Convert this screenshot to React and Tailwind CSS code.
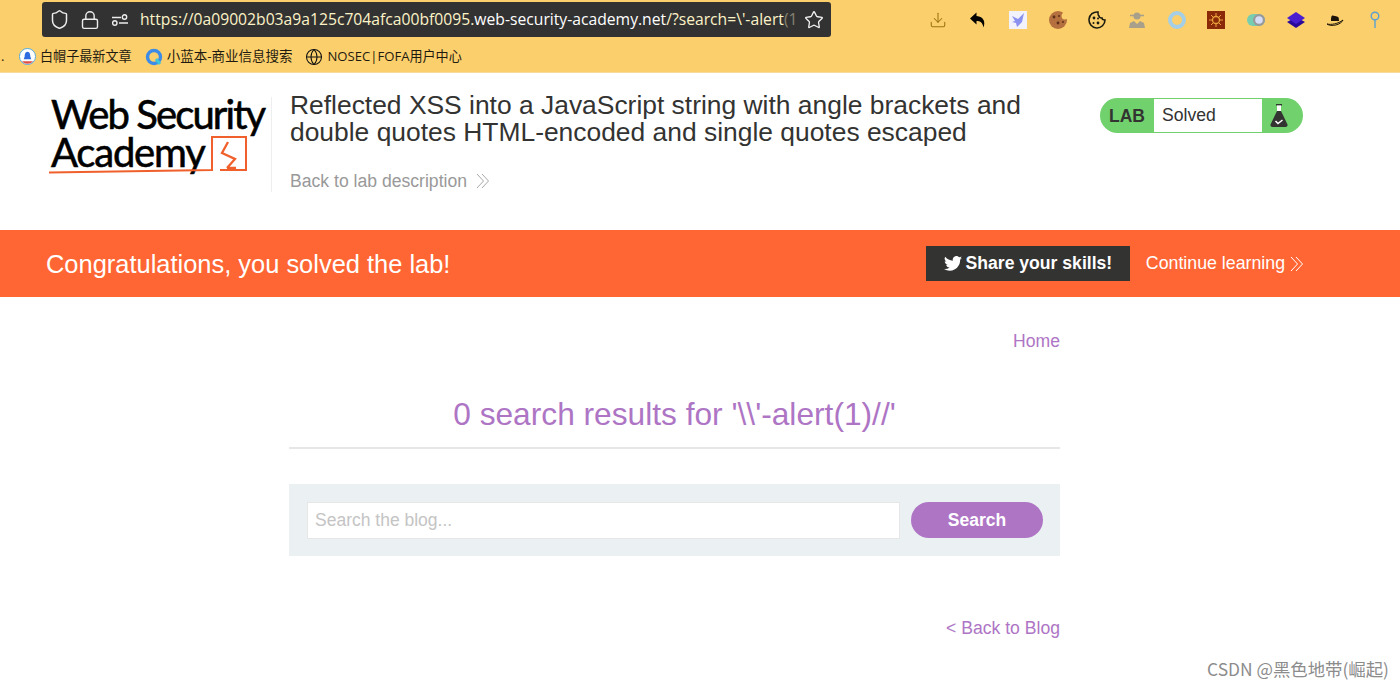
import React from "react";
import { Shield, Lock, Star, Download, Globe } from "lucide-react";

const sans = "font-['Liberation_Sans',Arial,'Noto_Sans_CJK_SC',sans-serif]";

function Chevrons({ className, color }) {
  return (
    <svg className={className} width="14" height="16" viewBox="0 0 14 16" fill="none" stroke={color} strokeWidth="1">
      <path d="M1 1l6.500 7L1 15M6 1l6.500 7L6 15" />
    </svg>
  );
}

function Extensions() {
  return (
    <div className="flex items-center gap-[21.7px]">
      <Download size={18} strokeWidth={1.4} color="#9a7412" />
      <svg width="18" height="18" viewBox="0 0 18 18" fill="#000"><path d="M7.500 1.500L1 7.500l6.500 6V10c3.500 0 6 1 7 6.500 2-5.500.500-11-7-11.500z" /></svg>
      <svg width="18" height="18" viewBox="0 0 18 18"><rect width="18" height="18" fill="#f1f2fb" /><path d="M15 2l-2 9-5 5-1-4-4-1 3-1-3-5 6 3z" fill="#8b91ee" /></svg>
      <svg width="18" height="18" viewBox="0 0 18 18"><circle cx="9" cy="9" r="9" fill="#b4703f" /><circle cx="16" cy="5" r="3.500" fill="#fbcf6b" /><circle cx="5" cy="6" r="1.400" fill="#5c2f18" /><circle cx="9" cy="12" r="1.400" fill="#5c2f18" /><circle cx="10" cy="5" r="1" fill="#5c2f18" /><circle cx="14" cy="11" r="1" fill="#5c2f18" /></svg>
      <svg width="18" height="18" viewBox="0 0 18 18"><path d="M10 1a8 8 0 1 0 7 8c-2 0-3-1-3-2-2 0-3-1-3-2-1 0-1-2-1-4z" fill="#fbcf6b" stroke="#1c1c10" strokeWidth="1.600" /><circle cx="6" cy="7" r="1.400" fill="#1c1c10" /><circle cx="10" cy="12" r="1.400" fill="#1c1c10" /><circle cx="10" cy="7.500" r="1" fill="#1c1c10" /><circle cx="5.500" cy="12" r="1" fill="#1c1c10" /></svg>
      <svg width="18" height="18" viewBox="0 0 18 18" fill="#a8a08a"><circle cx="9" cy="5" r="3.600" /><path d="M2 3.800h14v1.400H2zM1 17l1-5 4-2 3 3v4zM17 17l-1-5-4-2-3 3v4z" /></svg>
      <svg width="18" height="18" viewBox="0 0 18 18" fill="none"><circle cx="9" cy="9" r="7" stroke="#a4cfe6" strokeWidth="4" /></svg>
      <svg width="18" height="18" viewBox="0 0 18 18"><rect width="18" height="18" fill="#8a2a08" /><circle cx="9" cy="9" r="3.500" fill="none" stroke="#e9a23c" strokeWidth="1.300" /><path d="M9 2v3M9 13v3M2 9h3M13 9h3M4 4l2 2M12 12l2 2M14 4l-2 2M6 12l-2 2" stroke="#e9a23c" /></svg>
      <svg width="18" height="18" viewBox="0 0 18 18"><rect y="3" width="18" height="12" rx="6" fill="#76cdb0" /><rect x="6" y="3" width="12" height="12" rx="6" fill="#9a9a9a" /><circle cx="12" cy="9" r="3.800" fill="#d6def7" /></svg>
      <svg width="18" height="18" viewBox="0 0 18 18"><path d="M9 6l9 5-9 6-9-6z" fill="#2a0a9a" /><path d="M9 1l9 6-9 6-9-6z" fill="#4a1fd0" /></svg>
      <svg width="18" height="18" viewBox="0 0 18 18"><path d="M5 10c0-6 1-6 4-5s4 0 4 5z" fill="#1c1408" /><path d="M1 13c4 1 11 0 16-4-2 5-12 7-16 4z" fill="#fbcf6b" stroke="#1c1408" strokeWidth="1" /></svg>
      <svg width="18" height="18" viewBox="0 0 18 18" fill="none" stroke="#5b9fd3" strokeWidth="1.400"><circle cx="9" cy="5" r="3.800" /><path d="M9 9v8" /></svg>
    </div>
  );
}

function BrowserChrome() {
  return (
    <div className={`h-[73px] bg-[#fbcf6b] border-b border-[#f5dc9a] flex flex-col ${sans}`}>
      <div className="flex items-center h-[37px] pt-[2px] pl-[42px] pr-[16px] justify-between">
        <div className="w-[789px] h-[35px] bg-[#323232] rounded-[3px] flex items-center pl-[7px] pr-[7px] shrink-0">
          <Shield size={21} strokeWidth={1.700} color="#ececec" />
          <Lock size={20} strokeWidth={1.700} color="#ececec" className="ml-[10px]" />
          <svg className="ml-[12px]" width="16" height="12" viewBox="0 0 16 12" fill="none" stroke="#ececec" strokeWidth="1.400">
            <path d="M0 3.500h9M7 9h9" />
            <circle cx="12.500" cy="3" r="2.200" />
            <circle cx="2.800" cy="9" r="2.200" />
          </svg>
          <span className="ml-[12px] w-[658px] overflow-hidden whitespace-nowrap text-[15.700px] leading-[35px] font-['Open_Sans',sans-serif] text-[#fdf3c8]">
            https://0a09002b03a9a125c704afca00bf0095.<span className="text-white">web-security-academy.net</span>/?search=\'-alert<span className="opacity-40">(1</span>
          </span>
          <Star size={20} strokeWidth={1.600} color="#f0f0f0" className="ml-[6px]" />
        </div>
        <Extensions />
      </div>
      <div className="flex items-center h-[36px] pt-[4px] text-[#1f1a10] font-['Open_Sans','Noto_Sans_CJK_SC',sans-serif]">
        <span className="ml-[1px] w-[18px] text-[13px]">.</span>
        <svg width="17" height="17" viewBox="0 0 18 18"><circle cx="9" cy="9" r="8.500" fill="#fff" stroke="#4da7e0" /><path d="M9 4c2.500 0 3 3 3 5l1 3H5l1-3c0-2 .500-5 3-5z" fill="#2f6be0" /><path d="M3 14a8 8 0 0 0 12 0z" fill="#e04f3f" /></svg>
        <span className="ml-[4px] text-[13.100px]">白帽子最新文章</span>
        <svg className="ml-[13px]" width="18" height="18" viewBox="0 0 18 18" fill="none"><circle cx="9" cy="9" r="6.500" stroke="#3c8be6" strokeWidth="3.400" /><path d="M11 11l4 5" stroke="#3fc7d9" strokeWidth="3" /></svg>
        <span className="ml-[4px] text-[13.500px]">小蓝本-商业信息搜索</span>
        <Globe size={18} strokeWidth={1.400} color="#111" className="ml-[12px]" />
        <span className="ml-[5px] text-[13.100px]">NOSEC|FOFA用户中心</span>
      </div>
    </div>
  );
}

function Logo() {
  return (
    <div className="relative w-[222px] h-[95px] shrink-0">
      <div className="font-['Lato',sans-serif] text-[40px] leading-[38px] text-black whitespace-nowrap pl-[2px] -mt-[2px] [-webkit-text-stroke:0.6px_black]">
        <div className="tracking-[-1.900px]">Web Security</div>
        <div className="tracking-[-1.200px]">Academy</div>
      </div>
      <svg className="absolute left-0 top-[38px]" width="205" height="42" viewBox="0 0 205 42" fill="none" stroke="#f0602c" strokeWidth="2">
        <path d="M0 37.500c50-1 100-2 163-2.500V2h34v33h-26" />
        <path d="M179 7l-6 11 13 6-8 9M178 33h9" strokeWidth="2.300" />
      </svg>
    </div>
  );
}

function Header() {
  return (
    <div className="h-[157px] bg-white flex pl-[49px] pt-[24px] relative">
      <Logo />
      <div className="w-px h-[95px] bg-[#eeeeee] shrink-0" />
      <div className="pl-[18px] w-[790px] shrink-0">
        <h2 className="text-[26.420px] leading-[27px] text-[#333332] font-normal -mt-[5px] whitespace-nowrap">
          Reflected XSS into a JavaScript string with angle brackets and<br />double quotes HTML-encoded and single quotes escaped
        </h2>
        <div className="mt-[23px] flex items-center text-[#999999] text-[17.600px] leading-[24px]">
          <span>Back to lab description</span>
          <Chevrons className="ml-[9px]" color="#a8a8a8" />
        </div>
      </div>
      <div className="absolute left-[1100px] top-[25px] w-[203px] h-[35px] rounded-[18px] bg-[#70d16d] flex overflow-hidden">
        <span className="w-[54px] text-center font-bold text-[#333332] text-[17.500px] leading-[36px]">LAB</span>
        <span className="w-[108px] my-[1px] bg-white pl-[8px] text-[17.600px] leading-[33px] text-[#333332]">Solved</span>
        <div className="flex-1 flex items-center justify-center pr-[8px]">
          <svg width="18" height="25" viewBox="0 0 18 25">
            <rect x="6" y="1" width="6" height="1.500" fill="#333" />
            <path d="M7 2.500h4V9H7z" fill="#fff" />
            <path d="M7 8h4l6.500 13.500a2 2 0 0 1-2 2.500h-13a2 2 0 0 1-2-2.500z" fill="#333332" />
            <path d="M5.500 18l2.500 2.500 4.500-3.500" fill="none" stroke="#fff" strokeWidth="1.500" />
          </svg>
        </div>
      </div>
    </div>
  );
}

function Banner() {
  return (
    <div className="h-[67px] bg-[#ff6633] flex items-center pl-[46px] pr-[96px] justify-between">
      <span className="text-white text-[25.450px] mt-[1px]">Congratulations, you solved the lab!</span>
      <div className="flex items-center">
        <div className="w-[204px] h-[35px] bg-[#333332] flex items-center justify-center gap-[4px] text-white font-bold text-[17.600px]">
          <svg width="18" height="15" viewBox="0 0 24 20" fill="#fff">
            <path d="M24 2.400a9.800 9.800 0 0 1-2.800.800A5 5 0 0 0 23.300.500a9.900 9.900 0 0 1-3.100 1.200 4.900 4.900 0 0 0-8.400 4.500A14 14 0 0 1 1.700.900a4.900 4.900 0 0 0 1.500 6.600 4.900 4.900 0 0 1-2.200-.600c0 2.400 1.700 4.400 4 4.900a4.900 4.900 0 0 1-2.200.100 4.900 4.900 0 0 0 4.600 3.400A9.900 9.900 0 0 1 0 17.300 14 14 0 0 0 21.500 4.900 10 10 0 0 0 24 2.400z" />
          </svg>
          <span>Share your skills!</span>
        </div>
        <span className="ml-[16px] text-white text-[17.750px]">Continue learning</span>
        <Chevrons className="ml-[5px]" color="#ffffff" />
      </div>
    </div>
  );
}

function Content() {
  return (
    <div className="w-[771px] ml-[289px] text-[#ae75c5]">
      <div className="pt-[32px] text-right text-[17.600px] leading-[24px]">Home</div>
      <h1 className="mt-[40px] h-[56px] text-center text-[31.700px] leading-[43px] font-normal border-b-2 border-[#e6e6e6]">
        0 search results for '\\'-alert(1)//'
      </h1>
      <div className="mt-[35px] h-[72px] bg-[#ebf0f2] flex items-center pl-[18px] pr-[17px]">
        <div className="w-[593px] h-[37px] bg-white border border-[#e6e6e6] pl-[7px] text-[17.500px] leading-[35px] text-[#c4c4c4]">
          Search the blog...
        </div>
        <div className="ml-[11px] w-[132px] h-[36px] rounded-[18px] bg-[#ae75c5] text-white font-bold text-[17.500px] leading-[36px] text-center">
          Search
        </div>
      </div>
      <div className="mt-[60px] text-right text-[17.600px] leading-[24px]">&lt; Back to Blog</div>
    </div>
  );
}

export default function App() {
  return (
    <div className={`relative w-[1400px] h-[688px] overflow-hidden bg-white ${sans}`}>
      <BrowserChrome />
      <Header />
      <Banner />
      <Content />
      <div className="absolute right-[11px] bottom-[9px] text-[17.400px] leading-[20px] text-[#8c8c8c] font-['Noto_Sans_CJK_SC',sans-serif]">
        CSDN @黑色地带(崛起)
      </div>
    </div>
  );
}
